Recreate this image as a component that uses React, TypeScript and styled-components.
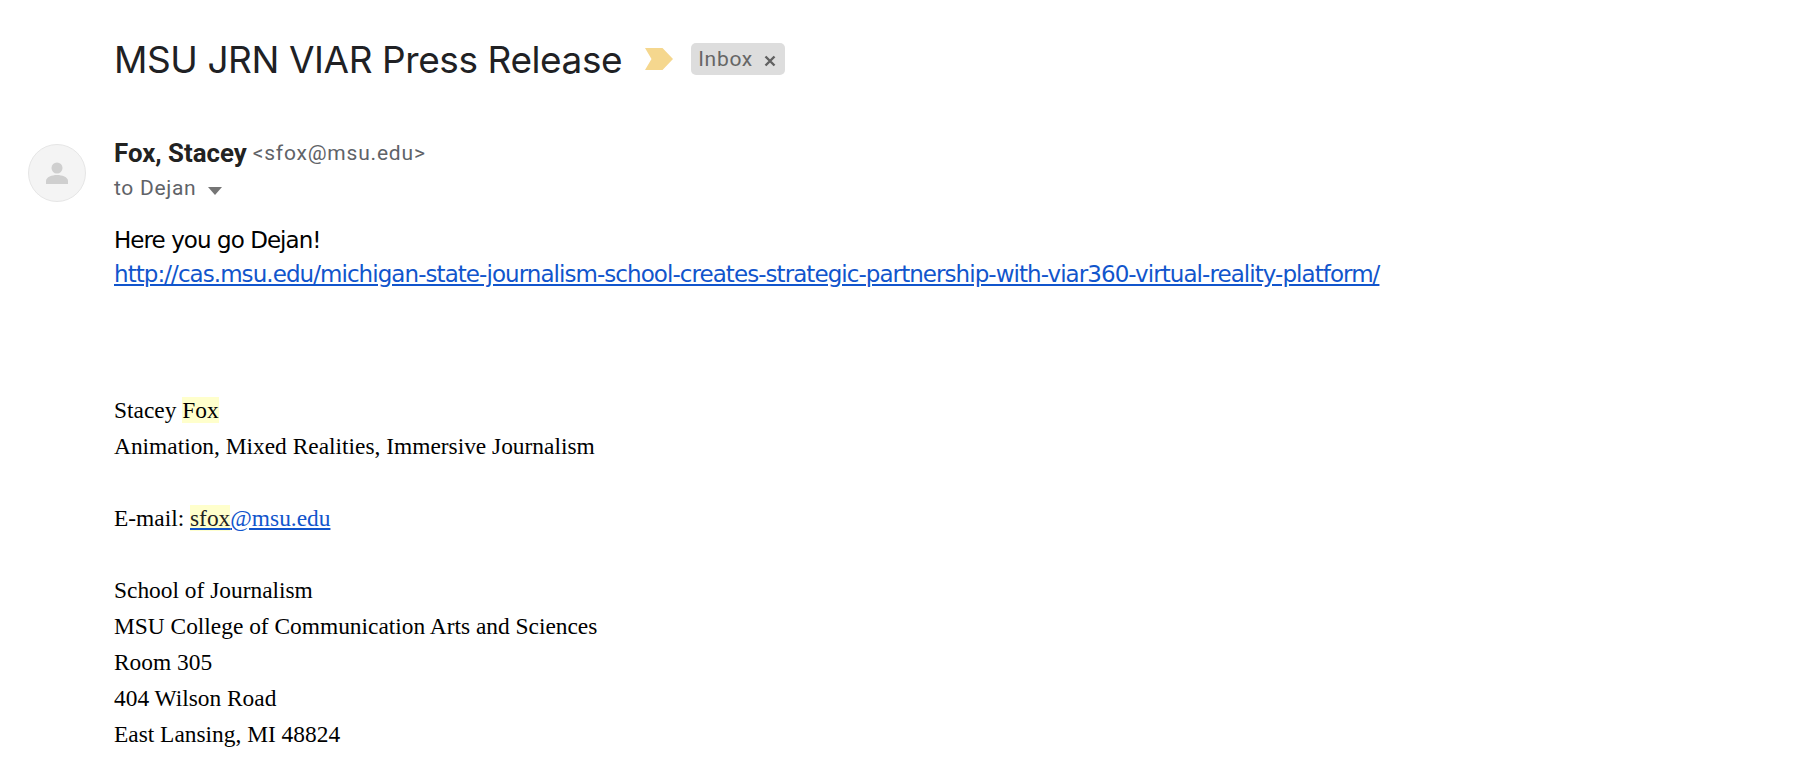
import styled, { createGlobalStyle } from "styled-components";

const GlobalStyle = createGlobalStyle`
    html, body {
        margin: 0;
        background: #ffffff;
    }
`;

export default function App() {
    return (
        <>
            <GlobalStyle />
            <Page>
                <SubjectRow>
                    <Subject>MSU JRN VIAR Press Release</Subject>
                    <ImportantMark viewBox="0 0 28 22">
                        <path d="M0 0H17.5L28 11L17.5 22H0L6.5 11Z" fill="#f5d78e" />
                    </ImportantMark>
                    <InboxChip>
                        Inbox
                        <ChipClose viewBox="0 0 12 12">
                            <path d="M1.5 1.5L10.5 10.5M10.5 1.5L1.5 10.5" stroke="#616161" strokeWidth="2.4" />
                        </ChipClose>
                    </InboxChip>
                </SubjectRow>
                <MessageRow>
                    <Avatar>
                        <svg width="28" height="28" viewBox="0 0 28 28">
                            <circle cx="14" cy="9" r="5.5" fill="#cfcfcf" />
                            <path d="M3 25V22C3 18 9 16 14 16S25 18 25 22V25Z" fill="#cfcfcf" />
                        </svg>
                    </Avatar>
                    <Message>
                        <SenderLine>
                            <SenderName>Fox, Stacey</SenderName>
                            <SenderEmail>&lt;sfox@msu.edu&gt;</SenderEmail>
                        </SenderLine>
                        <ToLine>
                            to Dejan
                            <Caret viewBox="0 0 14 8">
                                <path d="M0 0H14L7 8Z" fill="#757575" />
                            </Caret>
                        </ToLine>
                        <BodyText>
                            <div>Here you go Dejan!</div>
                            <BodyLink href="#">
                                http://cas.msu.edu/michigan-state-journalism-school-creates-strategic-partnership-with-viar360-virtual-reality-platform/
                            </BodyLink>
                        </BodyText>
                        <Signature>
                            <div>Stacey <Mark>Fox</Mark></div>
                            <div>Animation, Mixed Realities, Immersive Journalism</div>
                            <Spacer />
                            <div>E-mail: <SigLink href="#"><LinkMark>sfox</LinkMark>@msu.edu</SigLink></div>
                            <Spacer />
                            <div>School of Journalism</div>
                            <div>MSU College of Communication Arts and Sciences</div>
                            <div>Room 305</div>
                            <div>404 Wilson Road</div>
                            <div>East Lansing, MI 48824</div>
                        </Signature>
                    </Message>
                </MessageRow>
            </Page>
        </>
    );
}

const Page = styled.div`
    width: 1798px;
    height: 784px;
    overflow: hidden;
    background: #ffffff;
    padding: 35px 0 0 28px;
    box-sizing: border-box;
`;

const SubjectRow = styled.div`
    display: flex;
    align-items: center;
    height: 48px;
    padding-left: 86px;
`;

const Subject = styled.h1`
    margin: 0;
    font-family: "Inter", sans-serif;
    font-size: 37px;
    font-weight: 400;
    letter-spacing: -0.42px;
    color: #202124;
`;

const ImportantMark = styled.svg`
    width: 28px;
    height: 22px;
    margin-left: 23px;
`;

const InboxChip = styled.div`
    display: flex;
    align-items: center;
    height: 32px;
    margin-left: 18px;
    padding: 0 9px 0 7px;
    border-radius: 5px;
    background: #dddddd;
    font-family: "Roboto", sans-serif;
    font-size: 21px;
    letter-spacing: 0.7px;
    color: #666666;
`;

const ChipClose = styled.svg`
    width: 12px;
    height: 12px;
    margin-left: 11px;
    margin-top: 3px;
`;

const MessageRow = styled.div`
    display: flex;
    margin-top: 55px;
`;

const Avatar = styled.div`
    display: flex;
    align-items: center;
    justify-content: center;
    flex-shrink: 0;
    width: 58px;
    height: 58px;
    margin-top: 6px;
    border-radius: 50%;
    box-sizing: border-box;
    border: 1px solid #e6e6e6;
    background: #f4f4f4;
`;

const Message = styled.div`
    margin-left: 28px;
`;

const SenderLine = styled.div`
    display: flex;
    align-items: center;
    height: 30px;
`;

const SenderName = styled.span`
    font-family: "Roboto", sans-serif;
    font-size: 25.8px;
    font-weight: 700;
    color: #222222;
`;

const SenderEmail = styled.span`
    margin-left: 6px;
    font-family: "Roboto", sans-serif;
    font-size: 21px;
    letter-spacing: 0.8px;
    color: #5f6368;
`;

const ToLine = styled.div`
    display: flex;
    align-items: center;
    height: 30px;
    margin-top: 5px;
    font-family: "Roboto", sans-serif;
    font-size: 21px;
    letter-spacing: 0.7px;
    color: #5f6368;
`;

const Caret = styled.svg`
    width: 14px;
    height: 8px;
    margin-left: 12px;
    margin-top: 5px;
`;

const BodyText = styled.div`
    margin-top: 20px;
    font-family: "DejaVu Sans", sans-serif;
    font-size: 23px;
    line-height: 34px;
    letter-spacing: -0.94px;
    color: #000000;
`;

const BodyLink = styled.a`
    color: #1155cc;
    text-decoration: underline;
`;

const Signature = styled.div`
    margin-top: 101px;
    font-family: "Liberation Serif", serif;
    font-size: 23.4px;
    line-height: 36px;
    color: #000000;
`;

const Spacer = styled.div`
    height: 36px;
`;

const Mark = styled.span`
    background: #ffffcc;
`;

const SigLink = styled.a`
    color: #1155cc;
    text-decoration: underline;
`;

const LinkMark = styled(Mark)`
    color: #222222;
`;
